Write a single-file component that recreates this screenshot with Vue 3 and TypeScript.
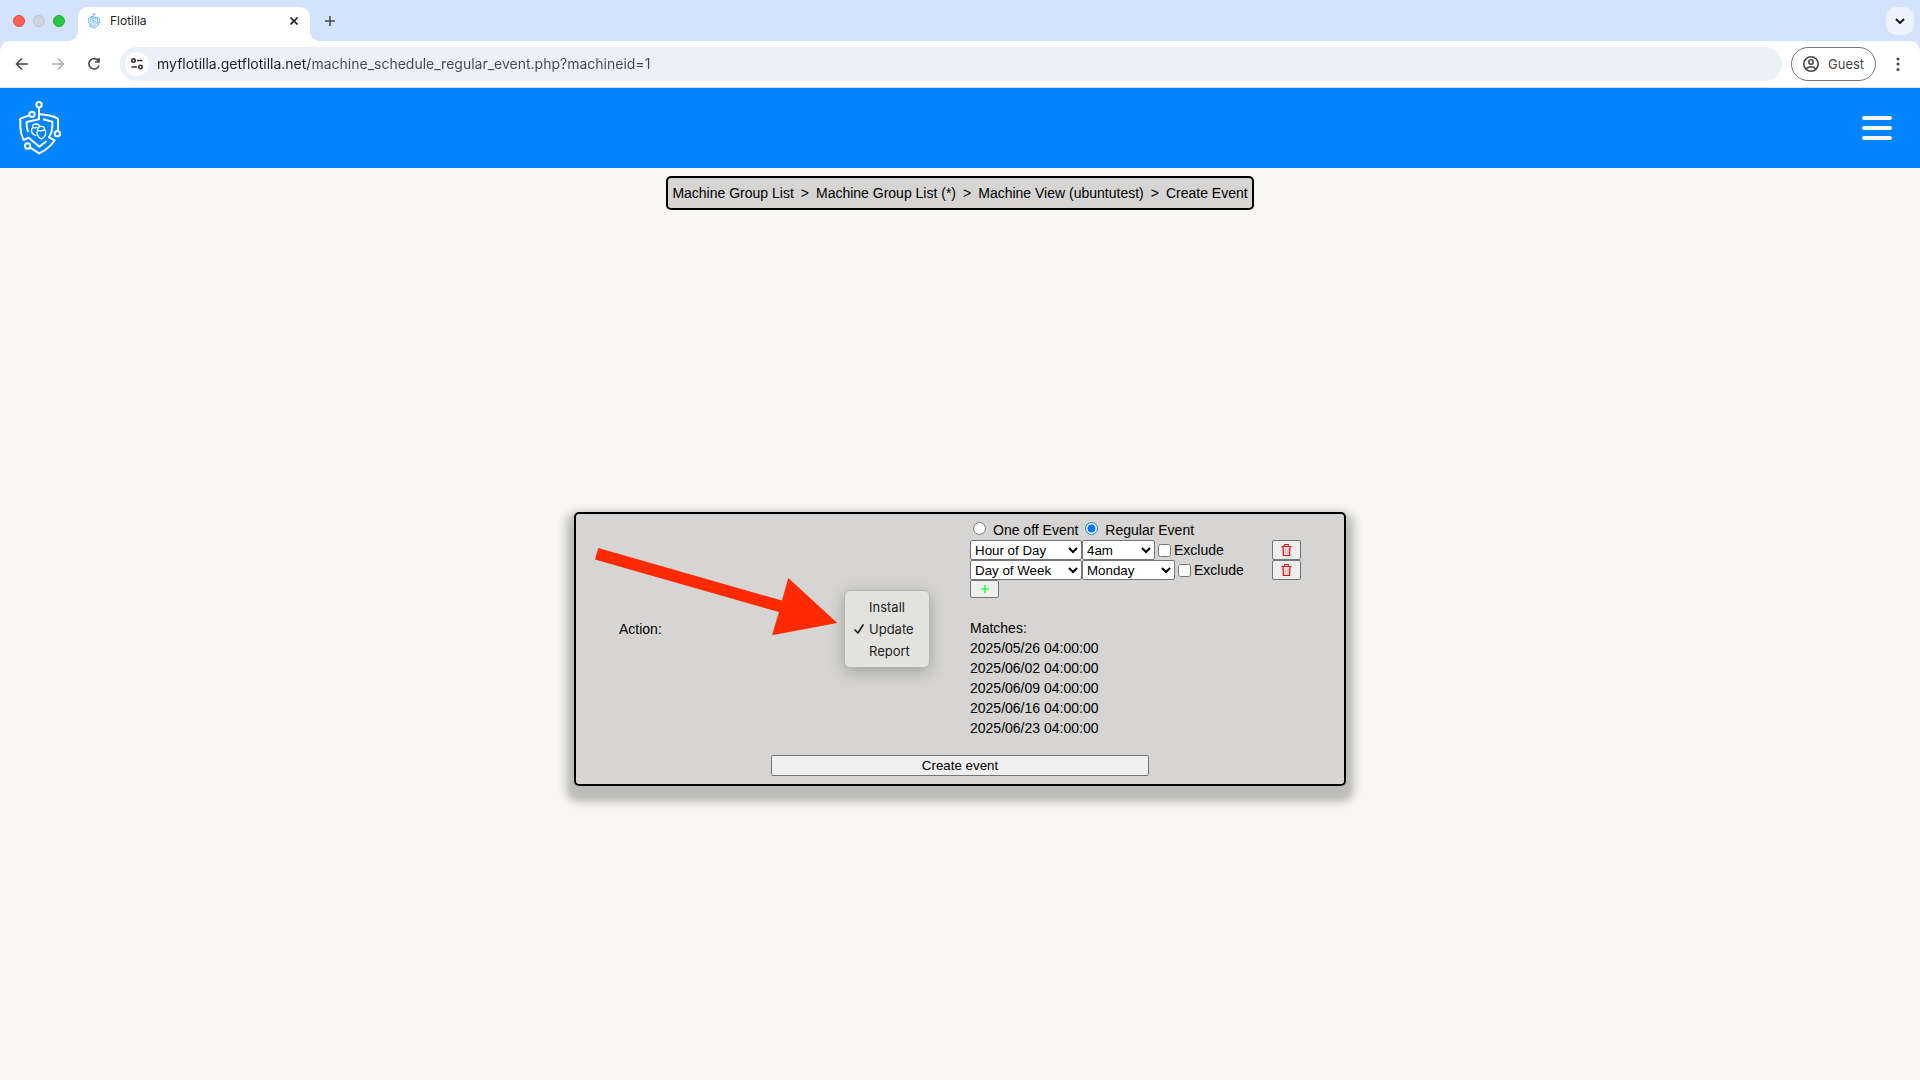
<script setup lang="ts">
import { ref } from 'vue'

interface Rule {
  id: number
  unit: string
  units: string[]
  value: string
  values: string[]
  exclude: boolean
  wide: boolean
}

const units = ['Hour of Day', 'Day of Week']
const rules = ref<Rule[]>([
  { id: 1, unit: 'Hour of Day', units, value: '4am', values: ['3am', '4am', '5am'], exclude: false, wide: false },
  { id: 2, unit: 'Day of Week', units, value: 'Monday', values: ['Monday', 'Tuesday', 'Wednesday'], exclude: false, wide: true },
])

const url = ref('myflotilla.getflotilla.net/machine_schedule_regular_event.php?machineid=1')
const crumbs = ['Machine Group List', 'Machine Group List (*)', 'Machine View (ubuntutest)', 'Create Event']
const actions = ['Install', 'Update', 'Report']
const action = ref('Update')
const kind = ref('regular')
const matches = [
  '2025/05/26 04:00:00',
  '2025/06/02 04:00:00',
  '2025/06/09 04:00:00',
  '2025/06/16 04:00:00',
  '2025/06/23 04:00:00',
]

function removeRule(id: number) {
  rules.value = rules.value.filter((r) => r.id !== id)
}

function addRule() {
  const id = Math.max(0, ...rules.value.map((r) => r.id)) + 1
  rules.value.push({ id, unit: 'Hour of Day', units, value: '4am', values: ['3am', '4am', '5am'], exclude: false, wide: false })
}
</script>

<template>
  <div class="window">
    <svg class="defs" aria-hidden="true">
      <symbol id="shield" viewBox="51 300 135 168">
        <g fill="none" stroke="currentColor" stroke-width="6" stroke-linejoin="round">
          <circle cx="117" cy="314" r="8" />
          <path d="M117 323V358L80 366V377Q80 386 85 396" />
          <circle cx="96" cy="343" r="8" />
          <path d="M88 346L61 356V382Q62 402 71 420L86 413L118 440L140 423" />
          <path d="M119 343Q150 344 174 356V391" />
          <circle cx="172" cy="401" r="8" />
          <path d="M129 358L157 365V380Q156 398 147 412L164 421Q148 446 118 460L90 443" />
          <circle cx="83" cy="438" r="8" />
          <g stroke-width="4">
            <path d="M99 382Q93 386 95 395Q98 404 109 407M99 382Q95 373 107 372Q119 373 119 380M99 382Q107 386 112 381" />
            <path d="M116 383Q117 378 124 379Q133 378 134 389M113 391Q109 396 112 404Q116 413 124 417Q136 411 137 401Q138 394 134 389Q124 395 113 391ZM113 391Q111 385 118 383" />
          </g>
        </g>
      </symbol>
    </svg>

    <header class="tabstrip">
      <div class="lights"><i class="red"></i><i class="grey"></i><i class="green"></i></div>
      <div class="tab">
        <svg class="favicon"><use href="#shield" /></svg>
        <span class="tab-title">Flotilla</span>
        <button class="plain" aria-label="Close tab">
          <svg width="8" height="8" viewBox="0 0 8 8"><path d="M0.500 0.500L7.500 7.500M7.500 0.500L0.500 7.500" stroke="#1f1f1f" stroke-width="1.600" /></svg>
        </button>
      </div>
      <button class="plain new-tab" aria-label="New tab">
        <svg width="12" height="12" viewBox="0 0 12 12"><path d="M6 1V11M1 6H11" stroke="#474747" stroke-width="1.600" /></svg>
      </button>
      <button class="plain tab-search" aria-label="Search tabs">
        <svg width="10" height="6" viewBox="0 0 10 6"><path d="M1 1L5 5L9 1" fill="none" stroke="#1f1f1f" stroke-width="2" /></svg>
      </button>
    </header>

    <div class="toolbar-back">
      <nav class="toolbar" aria-label="Browser">
        <button class="plain tool" aria-label="Back">
          <svg width="14" height="14" viewBox="0 0 14 14"><path d="M13 7H2M7 1.500L1.500 7L7 12.500" fill="none" stroke="#474747" stroke-width="1.600" /></svg>
        </button>
        <button class="plain tool" aria-label="Forward">
          <svg width="14" height="14" viewBox="0 0 14 14"><path d="M1 7H12M7 1.500L12.500 7L7 12.500" fill="none" stroke="#b0b0b0" stroke-width="1.600" /></svg>
        </button>
        <button class="plain tool" aria-label="Reload">
          <svg width="14" height="14" viewBox="0 0 14 14"><path d="M11.500 4A5.200 5.200 0 1 0 12 8.500M12 1V5H8" fill="none" stroke="#474747" stroke-width="1.600" /></svg>
        </button>
        <div class="address">
          <button class="plain site" aria-label="Site information">
            <svg width="14" height="14" viewBox="0 0 14 14" fill="none" stroke="#333" stroke-width="1.600"><circle cx="3.500" cy="3.500" r="1.700" /><path d="M7 3.500H12.500M1.500 10H7" /><circle cx="10.500" cy="10" r="1.700" /></svg>
          </button>
          <input v-model="url" type="text" aria-label="Address" />
        </div>
        <button class="guest">
          <svg width="18" height="18" viewBox="0 0 18 18" fill="none" stroke="#474747" stroke-width="1.600"><circle cx="9" cy="9" r="7.200" /><circle cx="9" cy="7" r="2.200" /><path d="M4 14Q9 9.500 14 14" /></svg>
          <span>Guest</span>
        </button>
        <button class="plain more" aria-label="Menu">
          <svg width="4" height="16" viewBox="0 0 4 16" fill="#474747"><circle cx="2" cy="3" r="1.500" /><circle cx="2" cy="8" r="1.500" /><circle cx="2" cy="13.500" r="1.500" /></svg>
        </button>
      </nav>
    </div>

    <header class="site-header">
      <a href="#" aria-label="Home"><svg class="logo"><use href="#shield" /></svg></a>
      <button class="plain burger" aria-label="Navigation"><i></i><i></i><i></i></button>
    </header>

    <nav class="crumbs" aria-label="Breadcrumb">
      <template v-for="(c, i) in crumbs" :key="i">
        <span v-if="i > 0">&gt;</span>
        <a href="#">{{ c }}</a>
      </template>
    </nav>

    <main>
      <form class="panel" @submit.prevent>
        <div class="fields">
          <label for="action">Action:</label>
          <div class="action">
            <select id="action" v-model="action">
              <option v-for="a in actions" :key="a">{{ a }}</option>
            </select>
            <ul class="popup" role="listbox" aria-label="Action">
              <li v-for="a in actions" :key="a" role="option" :aria-selected="a === action" @click="action = a">
                <svg width="10" height="10" viewBox="0 0 10 10"><path v-if="a === action" d="M1 6L4 9L9 1" fill="none" stroke="#222" stroke-width="1.700" stroke-linecap="round" stroke-linejoin="round" /></svg>
                <span>{{ a }}</span>
              </li>
            </ul>
          </div>
          <div class="schedule">
            <div class="kinds">
              <input id="one" v-model="kind" type="radio" value="one" /><label for="one">One off Event</label>
              <input id="regular" v-model="kind" type="radio" value="regular" /><label for="regular">Regular Event</label>
            </div>
            <div v-for="r in rules" :key="r.id" class="rule">
              <select v-model="r.unit" class="unit" aria-label="Unit">
                <option v-for="u in r.units" :key="u">{{ u }}</option>
              </select>
              <select v-model="r.value" class="value" :class="{ wide: r.wide }" aria-label="Value">
                <option v-for="v in r.values" :key="v">{{ v }}</option>
              </select>
              <input :id="'exclude' + r.id" v-model="r.exclude" type="checkbox" /><label :for="'exclude' + r.id">Exclude</label>
              <button type="button" class="small remove" aria-label="Remove" @click="removeRule(r.id)">
                <svg width="11" height="14" viewBox="0 0 11 14" fill="none" stroke="#f00"><path d="M0.500 3.500H10.500M3.500 3V1.500H7.500V3" /><path d="M2 4L2.500 12.500H8.500L9 4" stroke-width="1.200" /><path d="M4.200 5.500V11M6.800 5.500V11" stroke-opacity="0.350" /></svg>
              </button>
            </div>
            <button type="button" class="small add" aria-label="Add" @click="addRule">
              <svg width="8" height="8" viewBox="0 0 8 8"><path d="M4 0V8M0 4H8" stroke="#3f3" stroke-width="1.500" /></svg>
            </button>
            <div class="matches">
              <div>Matches:</div>
              <div v-for="m in matches" :key="m">{{ m }}</div>
            </div>
          </div>
        </div>
        <button type="submit" class="submit">Create event</button>
        <svg class="arrow" width="243" height="88" viewBox="0 0 243 88" aria-hidden="true">
          <path d="M3.300 0L187 52.600L193.300 30L242.300 75L177 87.300L184 64L0 11.600Z" fill="#ff2a00" />
        </svg>
      </form>
    </main>
  </div>
</template>

<style>
body {
  margin: 0;
}
</style>

<style scoped>
* {
  box-sizing: border-box;
}
.window {
  display: flex;
  flex-direction: column;
  min-height: 100vh;
  background: #f7f6f2;
  color: #000;
  font: 14px/20px "Liberation Sans", Arial, sans-serif;
}
.defs {
  position: absolute;
  width: 0;
  height: 0;
}
.plain {
  display: flex;
  align-items: center;
  justify-content: center;
  padding: 0;
  border: 0;
  background: none;
}
.tabstrip,
.toolbar,
.popup {
  font-family: Inter, sans-serif;
}
.tabstrip {
  display: flex;
  align-items: center;
  height: 41px;
  padding: 0 6px 0 13px;
  background: #d3e2fd;
}
.lights {
  display: flex;
  gap: 8px;
  width: 65px;
}
.lights i {
  width: 12px;
  height: 12px;
  border: 1px solid #e0443e;
  border-radius: 50%;
  background: #ff5f57;
}
.lights .grey {
  border-color: #bac3d0;
  background: #ced6e2;
}
.lights .green {
  border-color: #1dad2b;
  background: #28c840;
}
.tab {
  position: relative;
  display: flex;
  align-items: center;
  align-self: flex-end;
  width: 232px;
  height: 34px;
  padding: 0 12px 6px 9px;
  border-radius: 10px 10px 0 0;
  background: #fff;
}
.tab::before,
.tab::after {
  content: "";
  position: absolute;
  bottom: 0;
  width: 10px;
  height: 10px;
}
.tab::before {
  right: 100%;
  background: radial-gradient(circle at 0 0, transparent 10px, #fff 10px);
}
.tab::after {
  left: 100%;
  background: radial-gradient(circle at 100% 0, transparent 10px, #fff 10px);
}
.favicon {
  width: 14px;
  height: 16px;
  color: #0085ff;
}
.tab-title {
  flex: 1;
  margin-left: 9px;
  color: #1f1f1f;
  font-size: 12px;
}
.new-tab {
  margin-left: 14px;
}
.tab-search {
  width: 28px;
  height: 28px;
  margin-left: auto;
  border-radius: 10px;
  background: #ecf2fe;
}
.toolbar-back {
  background: #d3e2fd;
}
.toolbar {
  display: flex;
  align-items: center;
  height: 47px;
  padding: 0 20px 0 4px;
  border-bottom: 1px solid #dcdfe5;
  border-radius: 10px 10px 0 0;
  background: #fff;
}
.tool {
  width: 36px;
  height: 34px;
}
.address {
  display: flex;
  flex: 1;
  align-items: center;
  height: 34px;
  margin-left: 8px;
  padding-left: 5px;
  border-radius: 17px;
  background: #ecf0f9;
}
.site {
  width: 24px;
  height: 24px;
  border-radius: 50%;
  background: #fff;
}
.address input {
  flex: 1;
  margin-left: 8px;
  padding: 0;
  border: 0;
  background: linear-gradient(90deg, #1f1f1f 152px, #474747 152px) text;
  color: transparent;
  font: 14px/20px Inter, sans-serif;
}
.guest {
  display: flex;
  align-items: center;
  gap: 8px;
  width: 85px;
  height: 34px;
  margin: 0 20px 0 9px;
  padding: 0 0 0 10px;
  border: 1px solid #747775;
  border-radius: 17px;
  background: #fff;
  color: #474747;
  font: 13px/20px Inter, sans-serif;
}
.site-header {
  display: flex;
  align-items: center;
  justify-content: space-between;
  height: 80px;
  padding: 0 28px 0 17px;
  background: #0085ff;
}
.logo {
  display: block;
  width: 45px;
  height: 56px;
  color: #fff;
}
.burger {
  flex-direction: column;
  gap: 6px;
}
.burger i {
  width: 30px;
  height: 4px;
  border-radius: 2px;
  background: #f7f6f2;
}
.crumbs {
  display: flex;
  gap: 7px;
  align-self: center;
  margin: 8px;
  padding: 5px 4px;
  border: 2px solid #000;
  border-radius: 5px;
  background: #d6d5d3;
}
.crumbs a {
  color: #000;
  text-decoration: none;
}
main {
  display: flex;
  flex: 1;
  align-items: center;
  justify-content: center;
}
.panel {
  position: relative;
  width: 100%;
  max-width: 772px;
  padding: 6px 6px 8px;
  border: 2px solid #000;
  border-radius: 5px;
  background: #d6d5d3;
  box-shadow: 0 8px 8px 8px rgba(0, 0, 0, 0.24);
}
.fields {
  display: grid;
  grid-template-columns: 227fr 124fr 331fr;
  align-items: center;
  padding: 0 37px;
}
.action {
  position: relative;
}
.action select {
  display: block;
  width: 76px;
  margin-left: 4px;
}
.popup {
  position: absolute;
  top: -29px;
  left: -2px;
  width: 86px;
  margin: 0;
  padding: 5px 0;
  border: 1px solid #b4b4b2;
  border-radius: 6px;
  background: #e2e2df;
  box-shadow: 0 4px 16px rgba(0, 0, 0, 0.25);
  color: #222;
  font-size: 13px;
  line-height: 22px;
  list-style: none;
}
.popup li {
  display: flex;
  gap: 5px;
  align-items: center;
  padding-left: 9px;
}
.kinds {
  display: flex;
  height: 20px;
}
.kinds input {
  width: 13px;
  height: 13px;
  margin: 2px 7px 0 3px;
}
.kinds label {
  margin-right: 4px;
}
.rule {
  display: flex;
  align-items: center;
  height: 20px;
}
select {
  height: 20px;
  padding: 0;
  border: 1px solid #767676;
  border-radius: 2px;
  background-color: #fff;
  color: #000;
  font-family: "Liberation Sans", Arial, sans-serif;
}
.unit {
  width: 112px;
}
.value {
  width: 73px;
}
.value.wide {
  width: 93px;
}
.rule input {
  width: 13px;
  height: 13px;
  margin: 0 3px;
}
.small,
.submit {
  border: 1px solid #767676;
  border-radius: 2px;
  background: #efefef;
  color: #000;
  font-family: "Liberation Sans", Arial, sans-serif;
}
.small {
  display: flex;
  align-items: center;
  justify-content: center;
  width: 29px;
  height: 20px;
  padding: 0;
}
.remove {
  margin-left: auto;
}
.add {
  height: 18px;
}
.matches {
  margin-top: 20px;
}
.submit {
  display: block;
  width: 50%;
  height: 21px;
  margin: 17px auto 0;
  padding: 0;
}
.arrow {
  position: absolute;
  top: 34px;
  left: 19px;
  pointer-events: none;
}
</style>
